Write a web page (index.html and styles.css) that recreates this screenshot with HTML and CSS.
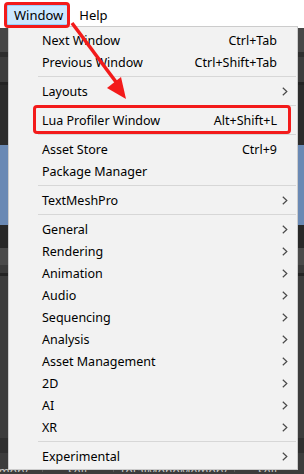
FILE: index.html
```html
<!DOCTYPE html>
<html lang="en">
<head>
  <meta charset="UTF-8" /><meta name="viewport" content="width=device-width, initial-scale=1.0" />
  <title>Window Menu</title>
  <link rel="stylesheet" href="styles.css">
</head>
<body>
  <div class="menubar">
    <span class="mb-item active">Window</span>
    <span class="mb-item">Help</span>
  </div>

  <!-- editor panels visible behind the popup -->
  <div class="editor">
    <div class="band b-tabs"></div>
    <div class="band b-dark1"></div>
    <div class="band b-tool"></div>
    <div class="band b-line"></div>
    <div class="band b-dark2"></div>
    <div class="band b-blue"></div>
    <div class="band b-dark3"></div>
    <div class="band b-head"></div>
    <div class="band b-mid"></div>
    <div class="band b-line"></div>
    <div class="band b-body"></div>
    <div class="band b-dark4"></div>
    <div class="band b-body2"></div>
    <div class="cols">
      <span class="col c1">totalMemory</span>
      <span class="col c2">self</span>
      <span class="col c3">totalMonoMemory</span>
      <span class="col c4">self</span>
    </div>
  </div>

  <div class="menu">
    <div class="item"><span class="label">Next Window</span><span class="key">Ctrl+Tab</span><span class="sub"></span></div>
    <div class="item"><span class="label">Previous Window</span><span class="key">Ctrl+Shift+Tab</span><span class="sub"></span></div>
    <div class="sep"></div>
    <div class="item has-sub"><span class="label">Layouts</span><span class="key"></span><span class="sub"></span></div>
    <div class="sep"></div>
    <div class="item"><span class="label">Lua Profiler Window</span><span class="key">Alt+Shift+L</span><span class="sub"></span></div>
    <div class="sep"></div>
    <div class="item"><span class="label">Asset Store</span><span class="key">Ctrl+9</span><span class="sub"></span></div>
    <div class="item"><span class="label">Package Manager</span><span class="key"></span><span class="sub"></span></div>
    <div class="sep"></div>
    <div class="item has-sub"><span class="label">TextMeshPro</span><span class="key"></span><span class="sub"></span></div>
    <div class="sep"></div>
    <div class="item has-sub"><span class="label">General</span><span class="key"></span><span class="sub"></span></div>
    <div class="item has-sub"><span class="label">Rendering</span><span class="key"></span><span class="sub"></span></div>
    <div class="item has-sub"><span class="label">Animation</span><span class="key"></span><span class="sub"></span></div>
    <div class="item has-sub"><span class="label">Audio</span><span class="key"></span><span class="sub"></span></div>
    <div class="item has-sub"><span class="label">Sequencing</span><span class="key"></span><span class="sub"></span></div>
    <div class="item has-sub"><span class="label">Analysis</span><span class="key"></span><span class="sub"></span></div>
    <div class="item has-sub"><span class="label">Asset Management</span><span class="key"></span><span class="sub"></span></div>
    <div class="item has-sub"><span class="label">2D</span><span class="key"></span><span class="sub"></span></div>
    <div class="item has-sub"><span class="label">AI</span><span class="key"></span><span class="sub"></span></div>
    <div class="item has-sub"><span class="label">XR</span><span class="key"></span><span class="sub"></span></div>
    <div class="sep"></div>
    <div class="item has-sub"><span class="label">Experimental</span><span class="key"></span><span class="sub"></span></div>
  </div>

  <!-- red annotations -->
  <div class="mark mark-window"></div>
  <div class="mark mark-lua"></div>
  <svg class="arrow" width="304" height="474" viewBox="0 0 304 474">
    <line x1="72" y1="23" x2="116" y2="82" stroke="#f31b1b" stroke-width="3.5"/>
    <polygon points="126,99 107,88 121,77" fill="#f31b1b"/>
  </svg>

  <script>
    // draw the submenu chevrons
    document.querySelectorAll('.item.has-sub .sub').forEach(el => {
      el.innerHTML = '<svg width="6" height="9" viewBox="0 0 6 9"><polyline points="0.8,0.8 4.8,4.5 0.8,8.2" fill="none" stroke="#4a4a4a" stroke-width="1.2"/></svg>';
    });
  </script>
</body>
</html>
```

FILE: styles.css
```css
body { margin:0; width:304px; height:474px; overflow:hidden; position:relative; background:#3c3c3c; font-family:"Noto Sans", "Liberation Sans", sans-serif; font-size:12.5px; color:#000; }

.menubar { height:28px; background:#fff; display:flex; align-items:flex-start; gap:2px; padding-left:7px; box-sizing:border-box; font-size:13px; }
.mb-item { height:20px; margin-top:5px; padding:0 7px; line-height:20px; box-sizing:border-box; }
.mb-item.active { background:#cce8ff; box-shadow: inset 0 0 0 1px #99d1ff; }

.editor { display:flex; flex-direction:column; }
.band { flex:none; }
.b-tabs { height:24px; background:#474747; }
.b-dark1 { height:5px; background:#2e2e2e; }
.b-tool { height:25px; background:#3d3d3d; }
.b-line { height:3px; background:#232323; }
.b-dark2 { height:60px; background:#2b2b2b; }
.b-blue { height:80px; background:#6a89b4; }
.b-dark3 { height:23px; background:#282828; }
.b-head { height:17px; background:#4a4a4a; }
.b-mid { height:8px; background:#3a3a3a; }
.b-body { height:162px; background:#3c3c3c; }
.b-dark4 { height:15px; background:#2f2f2f; }
.b-body2 { height:14px; background:#3c3c3c; }

.cols { height:5px; overflow:hidden; display:flex; color:#c4c4c4; font-size:12px; line-height:12px; }
.col { flex:none; text-align:center; white-space:nowrap; margin-top:-1px; border-right:1px solid #5a5a5a; overflow:hidden; }
.c1 { width:43px; direction:rtl; text-align:left; padding-right:14px; box-sizing:border-box; }
.c2 { width:70px; }
.c3 { width:120px; }
.c4 { width:66px; border-right:none; }

.menu { position:absolute; left:8px; top:26px; width:290px; box-sizing:border-box; background:#f2f2f2; border:1px solid #cccccc; padding:2px 0; }
.item { height:22px; display:flex; align-items:center; padding-left:33px; padding-right:4px; }
.label { flex:1; white-space:nowrap; }
.key { white-space:nowrap; }
.sub { width:16px; display:flex; justify-content:center; align-items:center; }
.sep { height:7px; margin:0 1px 0 29px; display:flex; align-items:center; }
.sep::before { content:""; display:block; width:100%; height:1px; background:#d7d7d7; }

.mark { position:absolute; border:3px solid #f31b1b; border-radius:4px; box-sizing:border-box; }
.mark-window { left:4px; top:2px; width:66px; height:26px; }
.mark-lua { left:33px; top:105px; width:258px; height:29px; }
.arrow { position:absolute; left:0; top:0; pointer-events:none; }
```
